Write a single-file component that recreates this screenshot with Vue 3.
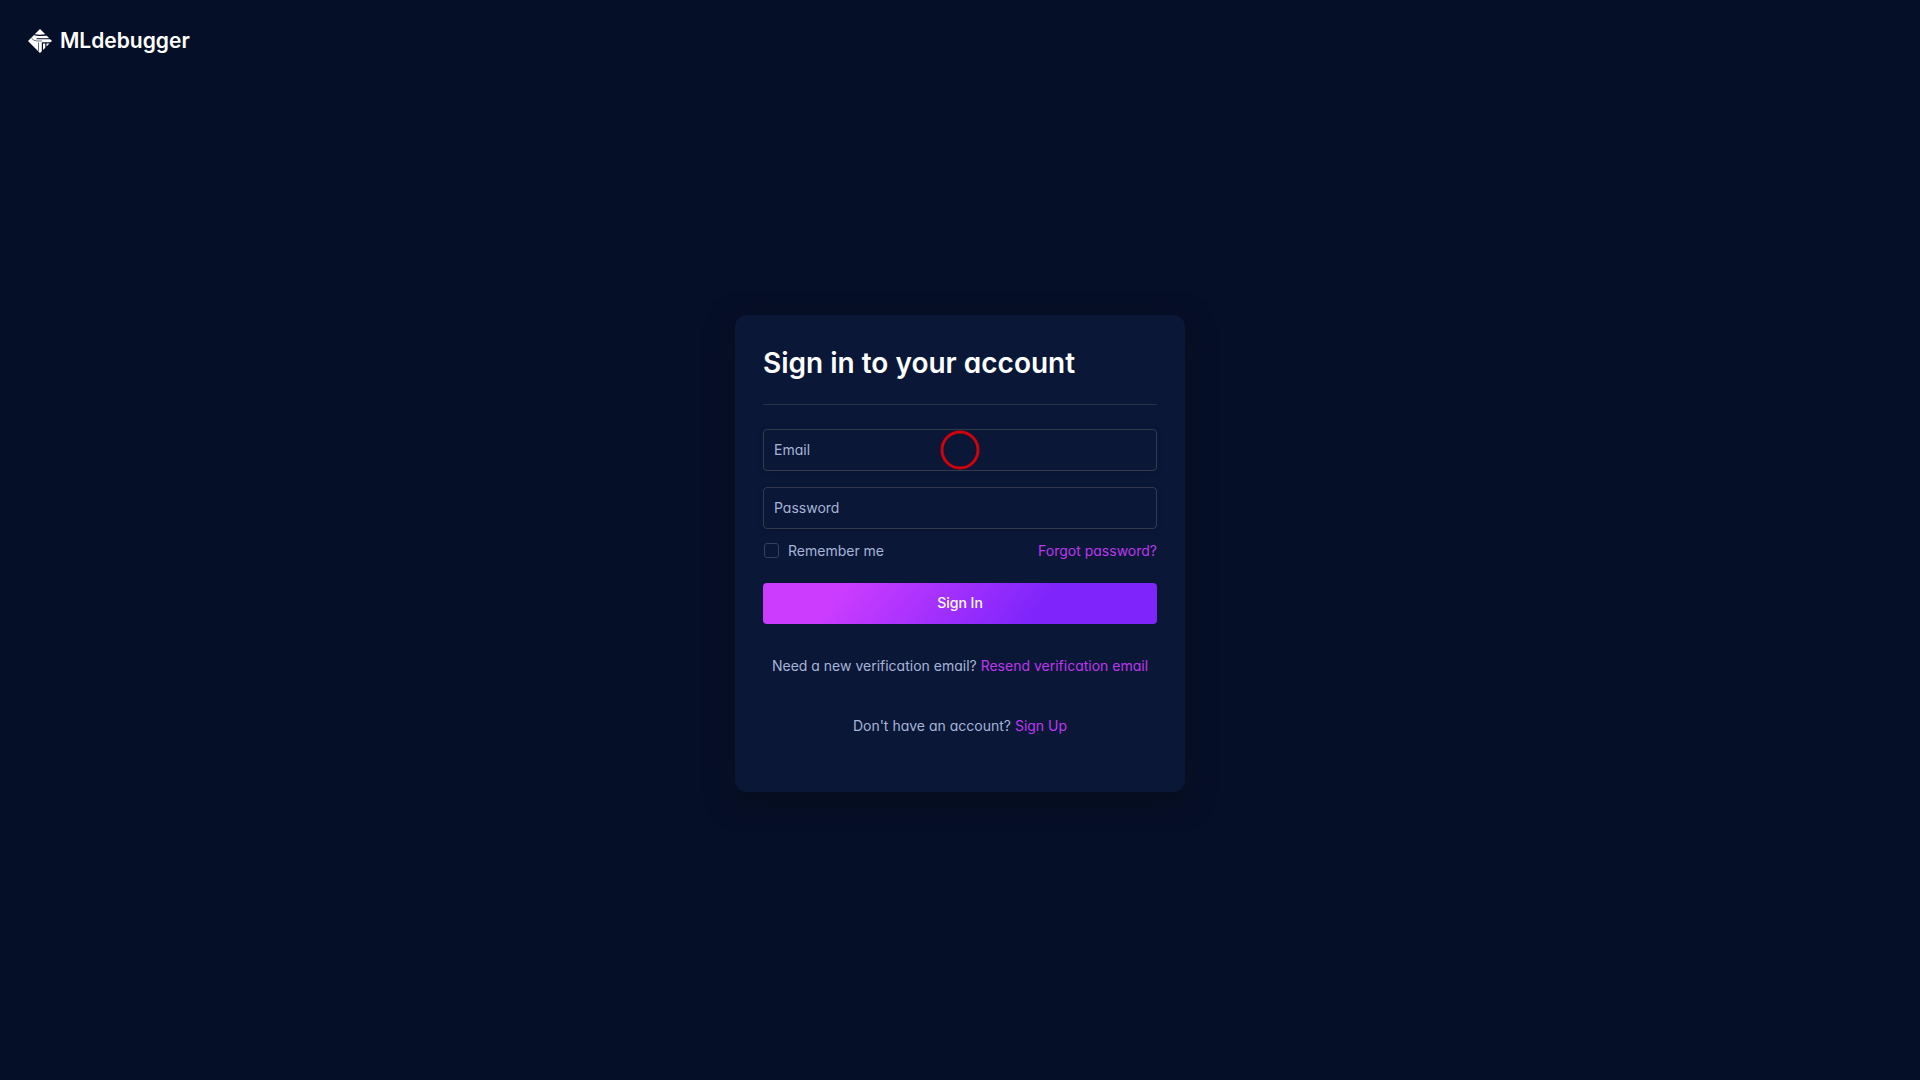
<script setup>
import { ref } from 'vue'

const email = ref('')
const password = ref('')
const remember = ref(false)
</script>

<template>
  <div class="page">
    <header class="header">
      <a href="#" class="brand">
        <svg class="brand-mark" viewBox="0 0 24 24" aria-hidden="true">
          <path d="M12 0 17.300 5.300Q12 6.200 6.700 5.300Z" />
          <path d="M6 6Q8.500 7.300 18.800 6.800L21.200 9.300H8.500V10.300H22.200L24 12 22.500 13.300H13.800V22.200L12 24 0 12Z" />
          <path d="M15 14.500H17.300V18.700L15 21ZM18.500 14.500H21.500L18.500 17.500Z" />
          <path class="brand-cut" d="M10.500 13.500V22M3.500 9.300Q5.500 11.800 9 12H14" />
        </svg>
        <span class="brand-name">MLdebugger</span>
      </a>
    </header>

    <main class="main">
      <form class="card" @submit.prevent>
        <h1 class="title">Sign in to your account</h1>

        <div class="field">
          <input v-model="email" type="email" placeholder="Email" aria-label="Email" />
          <span class="pointer-ring" aria-hidden="true"></span>
        </div>
        <div class="field">
          <input v-model="password" type="password" placeholder="Password" aria-label="Password" />
        </div>

        <div class="options">
          <label class="remember">
            <input v-model="remember" type="checkbox" />
            <span>Remember me</span>
          </label>
          <a href="#">Forgot password?</a>
        </div>

        <button type="submit" class="submit">Sign In</button>

        <p class="note">Need a new verification email? <a href="#">Resend verification email</a></p>
        <p class="note">Don't have an account? <a href="#">Sign Up</a></p>
      </form>
    </main>
  </div>
</template>

<style>
body {
  background: #060f28;
}
</style>

<style scoped>
.page {
  display: flex;
  flex-direction: column;
  min-height: 100vh;
  font-family: Inter, "Liberation Sans", sans-serif;
  font-feature-settings: "cv11";
  font-size: 14px;
  line-height: 20px;
  color: #a7b4d8;
}

.header {
  display: flex;
  align-items: center;
  height: 82px;
  padding: 0 28px;
}

.brand {
  display: flex;
  align-items: center;
  gap: 8px;
  color: #fff;
}

.brand-mark {
  width: 24px;
  height: 24px;
  fill: #fff;
}

.brand-cut {
  fill: none;
  stroke: #060f28;
  stroke-width: 1;
  stroke-opacity: 0.6;
}

.brand-name {
  font-size: 21px;
  line-height: 24px;
  font-weight: 600;
}

.main {
  display: flex;
  flex: 1;
  align-items: center;
  justify-content: center;
  padding-bottom: 56px;
}

.card {
  box-sizing: border-box;
  width: 100%;
  max-width: 450px;
  padding: 28px 28px 56px;
  border-radius: 12px;
  background: #0a1737;
  box-shadow: 0 8px 28px rgba(8, 14, 28, 0.9);
}

.title {
  margin: 0 0 24px;
  padding-bottom: 21px;
  border-bottom: 1px solid #2b3144;
  color: #fff;
  font-size: 28px;
  line-height: 40px;
  font-weight: 600;
}

.field {
  position: relative;
  margin-bottom: 16px;
}

.field input {
  display: block;
  box-sizing: border-box;
  width: 100%;
  height: 42px;
  padding: 0 10px;
  border: 1px solid #343a4c;
  border-radius: 4px;
  outline: none;
  background: transparent;
  box-shadow: 0 2px 6px rgba(0, 0, 0, 0.16);
  color: #fff;
  font: inherit;
  font-feature-settings: inherit;
}

.field input::placeholder {
  color: #a7b4d8;
  opacity: 1;
}

.pointer-ring {
  position: absolute;
  top: 50%;
  left: 50%;
  box-sizing: border-box;
  width: 39px;
  height: 39px;
  border: 3px solid #d0020b;
  border-radius: 50%;
  transform: translate(-50%, -50%);
  pointer-events: none;
}

.options {
  display: flex;
  align-items: center;
  justify-content: space-between;
  margin: -4px 0 22px;
}

.remember {
  display: flex;
  align-items: center;
  gap: 9px;
}

.remember input {
  appearance: none;
  box-sizing: border-box;
  width: 15px;
  height: 15px;
  margin: 0 0 0 1px;
  border: 1px solid #35405d;
  border-radius: 3px;
}

.remember input:checked {
  background: #cb3cff;
}

a {
  color: #cb3cff;
  text-decoration: none;
}

.options a,
.note a {
  color: #bd38ee;
}

.submit {
  display: block;
  width: 100%;
  height: 41px;
  padding: 0;
  border: 0;
  border-radius: 4px;
  background: linear-gradient(128deg, #cb3cff 20%, #7f25fb 69%);
  color: #fff;
  font: inherit;
  font-feature-settings: inherit;
  font-weight: 500;
  cursor: pointer;
}

.note {
  margin: 32px 0 40px;
  text-align: center;
}

.note + .note {
  margin: 0;
}
</style>
